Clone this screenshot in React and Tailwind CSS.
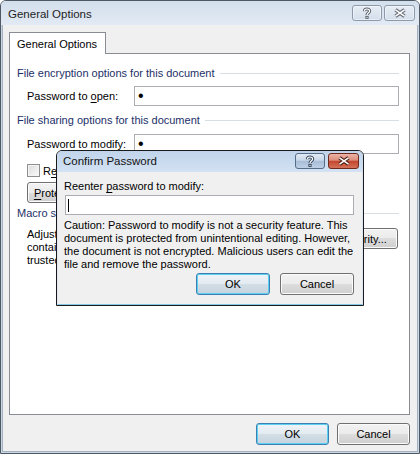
import React from 'react';

const btnNormal =
  'flex h-[22px] items-center justify-center rounded-[3px] border border-[#707070] bg-[linear-gradient(to_bottom,#f2f2f2_0%,#ebebeb_50%,#dddddd_50%,#cfcfcf_100%)] shadow-[inset_0_0_0_1px_#fbfbfb] leading-[16px]';
const btnDefault =
  'flex h-[22px] items-center justify-center rounded-[3px] border border-[#3c7fb1] bg-[linear-gradient(to_bottom,#eef3f7_0%,#e3ebf1_50%,#d3dee6_50%,#c7d4de_100%)] shadow-[inset_0_0_0_1px_#5ccff3] leading-[16px]';

const HelpGlyph = ({ dark }) => (
  <svg width="10" height="12" viewBox="0 0 10 12">
    <path d="M2.4 4.2 C2.4 1.3 7.6 1.3 7.6 4 C7.6 6.1 5 5.9 5 8" fill="none" stroke={dark} strokeWidth="3.2" />
    <path d="M2.4 4.2 C2.4 1.3 7.6 1.3 7.6 4 C7.6 6.1 5 5.9 5 8" fill="none" stroke="#fff" strokeWidth="1.2" />
    <rect x="3.4" y="8.9" width="3.2" height="3" fill={dark} />
    <rect x="4.4" y="9.9" width="1.2" height="1" fill="#fff" />
  </svg>
);

const CloseGlyph = ({ dark }) => (
  <svg width="14" height="10" viewBox="0 0 14 10">
    <path d="M2.5 1.8 L11.5 8.2 M11.5 1.8 L2.5 8.2" stroke={dark} strokeWidth="3.6" />
    <path d="M2.5 1.8 L11.5 8.2 M11.5 1.8 L2.5 8.2" stroke="#fff" strokeWidth="1.6" />
  </svg>
);

const GroupHeader = ({ children, className = '' }) => (
  <div className={`flex h-[16px] items-center ${className}`}>
    <span className="leading-[16px] text-[#1b3068]">{children}</span>
    <div className="ml-[5px] h-px flex-1 bg-[#d5dfe5]" />
  </div>
);

const PasswordField = () => (
  <div className="flex h-[20px] flex-1 items-center border border-[#abadb3] bg-white pl-[3px]">
    <span className="text-[16px] leading-[16px]">•</span>
  </div>
);

const ConfirmDialog = () => (
  <div className="absolute left-[56px] top-[150px] flex h-[156px] w-[308px] flex-col rounded-t-[6px] border border-[#1b1b1b] bg-[#f0f0f0]">
    <div className="flex h-[21px] items-start justify-between rounded-t-[5px] bg-[linear-gradient(to_bottom,#c0d4eb,#d3e2f3)] pl-[6px] pr-[4px]">
      <span className="mt-[2px] text-[11.5px] leading-[16px] text-[#111]">Confirm Password</span>
      <div className="mt-[2px] flex gap-[3px]">
        <div className="flex h-[16px] w-[30px] items-center justify-center rounded-[3px] border border-[#566d8a] bg-[linear-gradient(to_bottom,#e2eaf4_0%,#c9d7e9_45%,#a9bdd8_50%,#bccfe5_100%)]">
          <HelpGlyph dark="#3a4a5e" />
        </div>
        <div className="flex h-[16px] w-[31px] items-center justify-center rounded-[3px] border border-[#6e2a1d] bg-[linear-gradient(to_bottom,#ecb3a6_0%,#dd8d7b_45%,#c4452d_50%,#d37259_100%)]">
          <CloseGlyph dark="#4a1a10" />
        </div>
      </div>
    </div>
    <div className="flex flex-1 flex-col border-x border-b border-x-[#dce7f3] border-b-[#86c9e6] pl-[6px] pr-[8px] pt-[6px]">
      <span className="leading-[16px]">
        Reenter <span className="underline underline-offset-[2px]">p</span>assword to modify:
      </span>
      <div className="ml-[1px] mt-[1px] flex h-[20px] w-[289px] items-center border border-[#abadb3] bg-white">
        <span className="ml-[2px] h-[13px] w-px bg-black" />
      </div>
      <p className="mt-[4px] whitespace-nowrap leading-[13px]">
        Caution: Password to modify is not a security feature. This
        <br />
        document is protected from unintentional editing. However,
        <br />
        the document is not encrypted. Malicious users can edit the
        <br />
        file and remove the password.
      </p>
      <div className="mt-[2px] flex justify-end gap-[10px]">
        <button className={`${btnDefault} w-[74px]`}>OK</button>
        <button className={`${btnNormal} w-[74px]`}>Cancel</button>
      </div>
    </div>
  </div>
);

const App = () => {
  return (
    <div className="relative h-[454px] w-[420px] overflow-hidden bg-white font-['Liberation_Sans',Arial,sans-serif] text-[11px] text-black">
      <div className="flex h-[454px] w-[420px] flex-col rounded-t-[6px] border border-[#4f5966] bg-[#dfe7f1]">
        <div className="flex h-[24px] items-start justify-between rounded-t-[5px] bg-[linear-gradient(to_bottom,#d3dfec,#e2eaf4)] pl-[7px] pr-[4px]">
          <span className="mt-[5px] text-[11.5px] leading-[16px] text-[#1e1e1e]">General Options</span>
          <div className="mt-[4px] flex gap-[2px]">
            <div className="flex h-[16px] w-[30px] items-center justify-center rounded-[3px] border border-[#8d9aab] bg-[linear-gradient(to_bottom,#e7edf5,#d4deea)] shadow-[inset_0_0_0_1px_rgba(255,255,255,0.45)]">
              <HelpGlyph dark="#5f6670" />
            </div>
            <div className="flex h-[16px] w-[31px] items-center justify-center rounded-[3px] border border-[#8d9aab] bg-[linear-gradient(to_bottom,#e7edf5,#d4deea)] shadow-[inset_0_0_0_1px_rgba(255,255,255,0.45)]">
              <CloseGlyph dark="#5f6670" />
            </div>
          </div>
        </div>

        <div className="flex flex-1 flex-col border-x border-b border-[#cbd6e3]">
          <div className="flex flex-1 flex-col border-x border-b border-[#a4b2c3] bg-[#f0f0f0] pl-[6px] pr-[7px] pt-[7px]">
            <div className="relative z-10 -mb-px h-[22px] w-[97px] border border-b-0 border-[#898c95] bg-white pl-[7px] pt-[3px]">
              <span className="leading-[16px]">General Options</span>
            </div>
            <div className="flex h-[362px] flex-col border border-[#898c95] bg-white pl-[7px] pr-[10px] pt-[11px]">
              <GroupHeader>File encryption options for this document</GroupHeader>
              <div className="ml-[10px] mt-[5px] flex items-center">
                <span className="w-[107px] leading-[16px]">
                  Password to <span className="underline underline-offset-[2px]">o</span>pen:
                </span>
                <PasswordField />
              </div>

              <GroupHeader className="mt-[6px]">File sharing options for this document</GroupHeader>
              <div className="ml-[10px] mt-[6px] flex items-center">
                <span className="w-[107px] leading-[16px]">
                  Password to <span className="underline underline-offset-[2px]">m</span>odify:
                </span>
                <PasswordField />
              </div>

              <div className="ml-[10px] mt-[10px] flex h-[13px] items-center">
                <span className="h-[13px] w-[13px] border border-[#8f8f8f] bg-[linear-gradient(135deg,#dcdcdc,#fbfbfb)] shadow-[inset_0_0_0_1px_#f4f4f4]" />
                <span className="ml-[3px] leading-[16px]">
                  R<span className="underline underline-offset-[2px]">e</span>ad-only recommended
                </span>
              </div>
              <button className={`${btnNormal} ml-[10px] mt-[5px] !h-[21px] w-[111px]`}>
                <span>
                  <span className="underline underline-offset-[2px]">P</span>rotect Document...
                </span>
              </button>

              <GroupHeader className="mt-[2px]">Macro security</GroupHeader>
              <div className="ml-[10px] mt-[7px] flex items-start justify-between">
                <p className="whitespace-nowrap leading-[13px]">
                  Adjust the security level for opening files that might
                  <br />
                  contain macro viruses, and specify the names of
                  <br />
                  trusted macro developers.
                </p>
                <button className={`${btnNormal} mr-[1px] !h-[21px] w-[101px]`}>
                  Macro <span className="underline underline-offset-[2px]">S</span>ecurity...
                </button>
              </div>
            </div>
            <div className="mt-[8px] flex justify-end gap-[8px]">
              <button className={`${btnDefault} w-[73px]`}>OK</button>
              <button className={`${btnNormal} w-[73px]`}>Cancel</button>
            </div>
          </div>
        </div>
      </div>
      <ConfirmDialog />
    </div>
  );
};

export default App;
